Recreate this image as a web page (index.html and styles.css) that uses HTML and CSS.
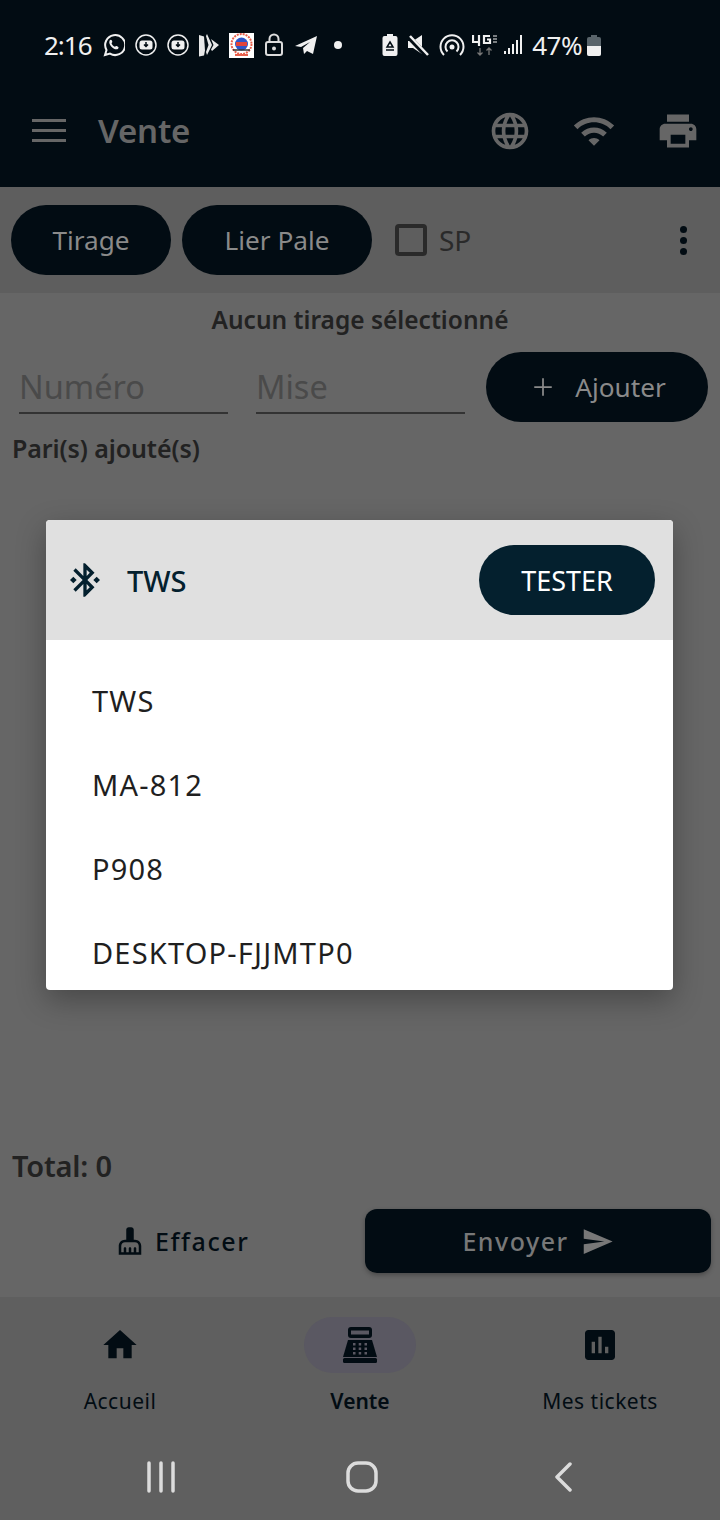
FILE: index.html
```html
<!DOCTYPE html>
<html lang="fr">
<head>
    <meta charset="UTF-8">
    <title>Vente</title>
    <link rel="stylesheet" href="styles.css">
</head>
<body>
<div class="phone">

    <div class="top">
        <div class="status">
            <div class="status-left">
                <span class="clock">2:16</span>
                <svg class="st" width="23" height="24" viewBox="0 0 23 24"><path d="M3 22l1.500-5A10 10 0 1 1 8 20.600z" fill="none" stroke="#f0f0f0" stroke-width="2"/><path d="M7.500 7.500c1-1.200 2-1 2.500.3l.3 1c.1.5-.7 1.200-.7 1.700.6 1.500 1.800 2.700 3.300 3.300.5 0 1.200-.8 1.700-.7l1 .4c1.200.5 1.300 1.600.2 2.500-3 2-10.500-4.500-8.100-8.500z" fill="#f0f0f0"/></svg>
                <svg class="st" width="22" height="24" viewBox="0 0 22 24"><circle cx="11" cy="12" r="10" fill="none" stroke="#f0f0f0" stroke-width="1.500"/><rect x="4.500" y="7.500" width="13" height="9" rx="2.500" fill="#f0f0f0"/><path d="M11 9v4M9 11.500l2 2 2-2" fill="none" stroke="#020c13" stroke-width="1.500"/></svg>
                <svg class="st" width="22" height="24" viewBox="0 0 22 24"><circle cx="11" cy="12" r="10" fill="none" stroke="#f0f0f0" stroke-width="1.500"/><rect x="4.500" y="7.500" width="13" height="9" rx="2.500" fill="#f0f0f0"/><path d="M11 9v4M9 11.500l2 2 2-2" fill="none" stroke="#020c13" stroke-width="1.500"/></svg>
                <svg class="st" width="20" height="24" viewBox="0 0 20 24"><path d="M0 2l5 1.500 1 14 -1 5-5 1z" fill="#e8e8e8"/><path d="M8 1l5 11-5 10-1-3 2.500-7L7 3z" fill="#e8e8e8"/><path d="M12 6l8 6-7 6-1-1.500 2.500-4.500z" fill="#e8e8e8"/></svg>
                <svg class="st" width="25" height="25" viewBox="0 0 25 25"><rect width="25" height="25" fill="#fff"/><circle cx="12.500" cy="11" r="10" fill="none" stroke="#e8604c" stroke-width="2" stroke-dasharray="2 1"/><circle cx="12.500" cy="11" r="6.500" fill="#2f55c8"/><rect x="7" y="9" width="11" height="4" fill="#e2433a"/><path d="M4 17h17" stroke="#333" stroke-width="1.500"/><path d="M6 22h13" stroke="#e8604c" stroke-width="2"/></svg>
                <svg class="st" width="20" height="24" viewBox="0 0 20 24"><rect x="2" y="9" width="16" height="13" rx="2" fill="none" stroke="#dcdcdc" stroke-width="2"/><path d="M5.500 9V6a4.500 4.500 0 0 1 9 0v3" fill="none" stroke="#dcdcdc" stroke-width="2"/><circle cx="10" cy="15.500" r="2" fill="#dcdcdc"/></svg>
                <svg class="st" width="24" height="24" viewBox="0 0 24 24"><path d="M1 13L23 3l-4 18-6-3-3 3-1-6 7-6-9 5z" fill="#f0f0f0"/></svg>
                <span class="dot"></span>
            </div>
            <div class="status-right">
                <svg class="st" width="16" height="24" viewBox="0 0 16 24"><path d="M5 1h6v2h2.500a2 2 0 0 1 2 2v16a2 2 0 0 1-2 2h-11a2 2 0 0 1-2-2V5a2 2 0 0 1 2-2H5z" fill="#f0f0f0"/><path d="M8 9l3 5H5zM4 17h8" fill="none" stroke="#020c13" stroke-width="1.500"/></svg>
                <svg class="st" width="21" height="24" viewBox="0 0 21 24"><path d="M0 8h5l9-6v19l-9-6H0z" fill="#f0f0f0"/><path d="M0 3l19 20" stroke="#020c13" stroke-width="5"/><path d="M2 3l18 19" stroke="#f0f0f0" stroke-width="2.500"/></svg>
                <svg class="st tight-1" width="26" height="24" viewBox="0 0 26 24"><path d="M5 22a11.500 11.500 0 1 1 16 0M8.500 18.500a6.500 6.500 0 1 1 9 0" fill="none" stroke="#f0f0f0" stroke-width="2"/><circle cx="13" cy="14" r="2.500" fill="#f0f0f0"/></svg>
                <svg class="st tight-3" width="26" height="24" viewBox="0 0 26 24"><path d="M1 2v7h7M7 2v11M18 3h-6v7h6V6.500h-3" fill="none" stroke="#f0f0f0" stroke-width="2.200"/><path d="M21 3h4M21 6h4M21 9h4" stroke="#f0f0f0" stroke-width="1"/><path d="M8 15v7M5.500 19.500L8 22l2.500-2.500M17 22v-7M14.500 17.500L17 15l2.500 2.500" fill="none" stroke="#777" stroke-width="1.300"/></svg>
                <svg class="st" width="18" height="24" viewBox="0 0 18 24"><path d="M1 18v3M5 15v6M9 11v10M13 7v14M17 2v19" stroke="#f0f0f0" stroke-width="2"/></svg>
                <span class="pct">47%</span>
                <svg class="st" width="14" height="24" viewBox="0 0 14 24"><path d="M4 2h6v2h2a2 2 0 0 1 2 2v15a2 2 0 0 1-2 2H2a2 2 0 0 1-2-2V6a2 2 0 0 1 2-2h2z" fill="#59646a"/><path d="M0 13h14v8a2 2 0 0 1-2 2H2a2 2 0 0 1-2-2z" fill="#f0f0f0"/></svg>
            </div>
        </div>
        <div class="appbar">
            <div class="burger"><i></i><i></i><i></i></div>
            <div class="appbar-title">Vente</div>
            <div class="appbar-icons">
                <svg width="44" height="44" viewBox="0 0 24 24"><path fill="#666" d="M11.990 2C6.470 2 2 6.480 2 12s4.470 10 9.990 10C17.520 22 22 17.520 22 12S17.520 2 11.990 2zm6.930 6h-2.950c-.32-1.250-.78-2.450-1.380-3.560 1.840.63 3.370 1.910 4.330 3.560zM12 4.040c.83 1.200 1.480 2.530 1.910 3.960h-3.820c.43-1.430 1.080-2.760 1.910-3.960zM4.260 14C4.100 13.360 4 12.690 4 12s.1-1.360.26-2h3.380c-.08.66-.14 1.320-.14 2 0 .68.06 1.340.14 2H4.260zm.82 2h2.950c.32 1.250.78 2.450 1.380 3.560-1.840-.63-3.370-1.900-4.330-3.560zm2.950-8H5.080c.96-1.660 2.490-2.930 4.330-3.560C8.810 5.550 8.350 6.750 8.030 8zM12 19.960c-.83-1.200-1.480-2.530-1.910-3.960h3.820c-.43 1.430-1.080 2.760-1.910 3.960zM14.340 14H9.660c-.09-.66-.16-1.320-.16-2 0-.68.07-1.350.16-2h4.680c.09.65.16 1.320.16 2 0 .68-.07 1.340-.16 2zm.25 5.560c.6-1.110 1.060-2.310 1.380-3.560h2.950c-.96 1.650-2.490 2.930-4.330 3.560zM16.360 14c.08-.66.14-1.320.14-2 0-.68-.06-1.340-.14-2h3.380c.16.64.26 1.310.26 2s-.1 1.360-.26 2h-3.380z"/></svg>
                <svg width="44" height="44" viewBox="0 0 24 24"><path fill="#666" d="M1 9l2 2c4.970-4.970 13.030-4.970 18 0l2-2C16.930 2.930 7.080 2.930 1 9zm8 8l3 3 3-3c-1.650-1.660-4.340-1.660-6 0zm-4-4l2 2c2.760-2.760 7.240-2.760 10 0l2-2C15.140 9.140 8.870 9.140 5 13z"/></svg>
                <svg width="44" height="44" viewBox="0 0 24 24"><path fill="#666" d="M19 8H5c-1.660 0-3 1.340-3 3v6h4v4h12v-4h4v-6c0-1.660-1.340-3-3-3zm-3 11H8v-5h8v5zm3-7c-.55 0-1-.45-1-1s.45-1 1-1 1 .45 1 1-.45 1-1 1zm-1-9H6v4h12V3z"/></svg>
            </div>
        </div>
    </div>

    <div class="toolbar">
        <div class="pill pill-tirage">Tirage</div>
        <div class="pill pill-lier">Lier Pale</div>
        <div class="check"></div>
        <div class="check-label">SP</div>
        <div class="more"><i></i><i></i><i></i></div>
    </div>

    <div class="content">
        <div class="selected">Aucun tirage sélectionné</div>
        <div class="form">
            <div class="field">Numéro</div>
            <div class="field">Mise</div>
            <div class="pill pill-add">
                <svg width="30" height="30" viewBox="0 0 24 24"><path fill="#8a8a8a" d="M19 12.700h-6.300V19h-1.400v-6.300H5v-1.400h6.300V5h1.400v6.300H19z"/></svg>
                <span>Ajouter</span>
            </div>
        </div>
        <div class="added">Pari(s) ajouté(s)</div>
        <div class="spacer"></div>
        <div class="total">Total: 0</div>
        <div class="actions">
            <div class="clear">
                <svg width="30" height="30" viewBox="0 0 24 24"><path fill="#020c13" d="M16 11h-1V3c0-1.100-.9-2-2-2h-2c-1.100 0-2 .9-2 2v8H8c-2.760 0-5 2.240-5 5v7h18v-7c0-2.760-2.240-5-5-5zm3 10h-2v-3c0-.55-.45-1-1-1s-1 .45-1 1v3h-2v-3c0-.55-.45-1-1-1s-1 .45-1 1v3H9v-3c0-.55-.45-1-1-1s-1 .45-1 1v3H5v-5c0-1.650 1.350-3 3-3h8c1.650 0 3 1.350 3 3v5z"/></svg>
                <span>Effacer</span>
            </div>
            <div class="send">
                <span>Envoyer</span>
                <svg width="33" height="33" viewBox="0 0 24 24"><path fill="#787878" d="M2.010 21L23 12 2.010 3 2 10l15 2-15 2z"/></svg>
            </div>
        </div>
    </div>

    <div class="bottom">
        <div class="tabs">
            <div class="tab">
                <div class="tab-icon">
                    <svg width="40" height="40" viewBox="0 0 24 24"><path fill="#020c13" d="M10 20v-6h4v6h5v-8h3L12 3 2 12h3v8z"/></svg>
                </div>
                <div class="tab-label">Accueil</div>
            </div>
            <div class="tab tab-on">
                <div class="tab-icon">
                    <svg width="36" height="36" viewBox="0 0 36 36"><rect x="6" y="0" width="24" height="11" rx="3" fill="#020c13"/><rect x="9" y="3.500" width="18" height="4" fill="#5a5862"/><path d="M6 13h24l5 17H1z" fill="#020c13"/><rect x="1" y="31" width="34" height="5" rx="1.500" fill="#020c13"/><g fill="#5a5862"><rect x="11" y="16" width="2.500" height="2.500"/><rect x="16.700" y="16" width="2.500" height="2.500"/><rect x="22.500" y="16" width="2.500" height="2.500"/><rect x="11" y="20.500" width="2.500" height="2.500"/><rect x="16.700" y="20.500" width="2.500" height="2.500"/><rect x="22.500" y="20.500" width="2.500" height="2.500"/><rect x="11" y="25" width="2.500" height="2.500"/><rect x="16.700" y="25" width="2.500" height="2.500"/><rect x="22.500" y="25" width="2.500" height="2.500"/></g></svg>
                </div>
                <div class="tab-label">Vente</div>
            </div>
            <div class="tab">
                <div class="tab-icon">
                    <svg width="40" height="40" viewBox="0 0 24 24"><path fill="#020c13" d="M19 3H5c-1.100 0-2 .9-2 2v14c0 1.100.9 2 2 2h14c1.100 0 2-.9 2-2V5c0-1.100-.9-2-2-2zM9 17H7v-7h2v7zm4 0h-2V7h2v10zm4 0h-2v-4h2v4z"/></svg>
                </div>
                <div class="tab-label">Mes tickets</div>
            </div>
        </div>
        <div class="sysnav">
            <svg width="30" height="32" viewBox="0 0 30 32"><path d="M3 2v28M15 2v28M27 2v28" stroke="#dcdcdc" stroke-width="3.500" stroke-linecap="round"/></svg>
            <svg class="sys-home" width="32" height="32" viewBox="0 0 32 32"><rect x="2" y="2" width="28" height="28" rx="10" fill="none" stroke="#dcdcdc" stroke-width="3.500"/></svg>
            <svg width="20" height="30" viewBox="0 0 20 30"><path d="M16 2L3 15l13 13" fill="none" stroke="#dcdcdc" stroke-width="3.500" stroke-linecap="round" stroke-linejoin="round"/></svg>
        </div>
    </div>

    <div class="dialog">
        <div class="dialog-head">
            <svg width="40" height="40" viewBox="0 0 24 24"><path fill="#04202e" d="M7 12l-2-2-2 2 2 2 2-2zm10.710-4.290L12 2h-1v7.590L6.410 5 5 6.410 10.590 12 5 17.590 6.410 19 11 14.410V22h1l5.710-5.710-4.300-4.290 4.300-4.290zM13 5.830l1.880 1.880L13 9.590V5.830zm1.880 10.460L13 18.170v-3.760l1.880 1.880zM19 10l-2 2 2 2 2-2-2-2z"/></svg>
            <div class="dialog-name">TWS</div>
            <div class="tester">TESTER</div>
        </div>
        <div class="dialog-list">
            <div class="device">TWS</div>
            <div class="device">MA-812</div>
            <div class="device">P908</div>
            <div class="device">DESKTOP-FJJMTP0</div>
        </div>
    </div>

</div>
</body>
</html>
```

FILE: styles.css
```css
* {
    margin: 0;
    padding: 0;
    box-sizing: border-box;
}
body {
    font-family: "Noto Sans", Roboto, sans-serif;
    background: #666;
}
svg {
    display: block;
    flex: none;
}

.phone {
    position: relative;
    width: 720px;
    height: 1520px;
    display: flex;
    flex-direction: column;
    overflow: hidden;
}

/* status + app bar */
.top {
    height: 187px;
    background: #020c13;
}
.status {
    height: 90px;
    padding: 0 119px 0 44px;
    display: flex;
    align-items: center;
    justify-content: space-between;
}
.status-left,
.status-right {
    display: flex;
    align-items: center;
    gap: 10px;
    color: #f0f0f0;
}
.clock {
    font-size: 26px;
    width: 48px;
    letter-spacing: -1px;
}
.dot {
    width: 8px;
    height: 8px;
    margin-left: 6px;
    border-radius: 50%;
    background: #f0f0f0;
}
.pct {
    font-size: 26px;
    letter-spacing: -0.5px;
    margin-right: -5px;
}
.tight-1 {
    margin-right: -3px;
}
.tight-3 {
    margin-right: -4px;
}
.appbar {
    height: 97px;
    padding-left: 32px;
    padding-bottom: 16px;
    display: flex;
    align-items: center;
}
.burger {
    width: 34px;
    display: flex;
    flex-direction: column;
    gap: 7px;
}
.burger i {
    height: 3px;
    background: #666;
}
.appbar-title {
    margin-left: 32px;
    font-size: 33px;
    font-weight: 600;
    letter-spacing: -0.2px;
    color: #666;
}
.appbar-icons {
    margin-left: auto;
    margin-right: 20px;
    display: flex;
    gap: 40px;
}

/* toolbar */
.toolbar {
    height: 106px;
    padding-left: 11px;
    background: #5e5e5e;
    display: flex;
    align-items: center;
}
.pill {
    height: 70px;
    border-radius: 35px;
    background: #020c13;
    color: #8a8a8a;
    font-size: 26.200px;
    display: flex;
    align-items: center;
    justify-content: center;
}
.pill-tirage {
    width: 160px;
}
.pill-lier {
    width: 190px;
    margin-left: 11px;
}
.check {
    width: 32px;
    height: 32px;
    margin-left: 23px;
    border: 4px solid #2a2a2a;
    border-radius: 4px;
}
.check-label {
    margin-left: 12px;
    font-size: 28px;
    color: #2a2a2a;
}
.more {
    margin-left: auto;
    margin-right: 33px;
    display: flex;
    flex-direction: column;
    gap: 4px;
}
.more i {
    width: 7px;
    height: 7px;
    border-radius: 50%;
    background: #020c13;
}

/* content */
.content {
    flex: 1;
    background: #666;
    display: flex;
    flex-direction: column;
}
.selected {
    height: 52px;
    line-height: 54px;
    text-align: center;
    font-size: 24.500px;
    font-weight: 600;
    color: #222;
}
.form {
    margin-top: 7px;
    padding: 0 12px 0 19px;
    display: flex;
}
.field {
    width: 209px;
    height: 62px;
    margin-right: 28px;
    border-bottom: 2px solid #333;
    font-size: 32.500px;
    line-height: 70px;
    color: #4a4a4a;
}
.pill-add {
    width: 222px;
    margin-left: -7px;
    gap: 17px;
}
.added {
    margin: 9px 12px 0;
    height: 34px;
    line-height: 34px;
    font-size: 25px;
    font-weight: 600;
    letter-spacing: -0.1px;
    color: #222;
}
.spacer {
    flex: 1;
}
.total {
    margin: 0 12px;
    height: 40px;
    line-height: 40px;
    font-size: 29px;
    font-weight: 600;
    letter-spacing: -0.2px;
    color: #222;
}
.actions {
    margin: 23px 9px 24px 0;
    height: 64px;
    display: flex;
    align-items: center;
}
.clear {
    width: 365px;
    padding-left: 115px;
    display: flex;
    align-items: center;
    gap: 10px;
    font-size: 25px;
    font-weight: 500;
    letter-spacing: 1.600px;
    color: #020c13;
}
.send {
    flex: 1;
    height: 64px;
    border-radius: 12px;
    background: #020c13;
    box-shadow: 0 2px 5px rgba(0, 0, 0, 0.3);
    display: flex;
    align-items: center;
    justify-content: center;
    gap: 12px;
    font-size: 25px;
    font-weight: 500;
    letter-spacing: 1.500px;
    color: #787878;
}

/* bottom */
.bottom {
    height: 223px;
    background: #5f5f5f;
}
.tabs {
    height: 143px;
    padding-top: 20px;
    display: flex;
}
.tab {
    flex: 1;
    display: flex;
    flex-direction: column;
    align-items: center;
}
.tab-icon {
    width: 112px;
    height: 56px;
    border-radius: 28px;
    display: flex;
    align-items: center;
    justify-content: center;
}
.tab-on .tab-icon {
    background: #5a5862;
}
.tab-label {
    margin-top: 13px;
    height: 30px;
    line-height: 30px;
    font-size: 21px;
    letter-spacing: 0.5px;
    color: #020c13;
}
.tab-on .tab-label {
    font-weight: 600;
    letter-spacing: 0;
}
.sysnav {
    height: 80px;
    padding: 0 146px 6px;
    display: flex;
    align-items: center;
    justify-content: space-between;
}
.sys-home {
    margin-right: 6px;
}

/* dialog, sits over the dimmed page */
.dialog {
    position: absolute;
    left: 46px;
    top: 520px;
    width: 627px;
    height: 470px;
    border-radius: 4px;
    background: #fff;
    overflow: hidden;
    box-shadow: 0 10px 30px rgba(0, 0, 0, 0.3);
}
.dialog-head {
    height: 120px;
    padding: 0 18px 0 19px;
    background: #e0e0e0;
    display: flex;
    align-items: center;
}
.dialog-name {
    margin-left: 22px;
    font-size: 29px;
    font-weight: 500;
    color: #04202e;
}
.tester {
    width: 176px;
    height: 70px;
    margin-left: auto;
    border-radius: 35px;
    background: #04202e;
    color: #fff;
    font-size: 27px;
    display: flex;
    align-items: center;
    justify-content: center;
}
.dialog-list {
    padding: 19px 0 0 46px;
}
.device {
    height: 84px;
    line-height: 84px;
    font-size: 29px;
    letter-spacing: 1.200px;
    color: #1f1f1f;
}
```
